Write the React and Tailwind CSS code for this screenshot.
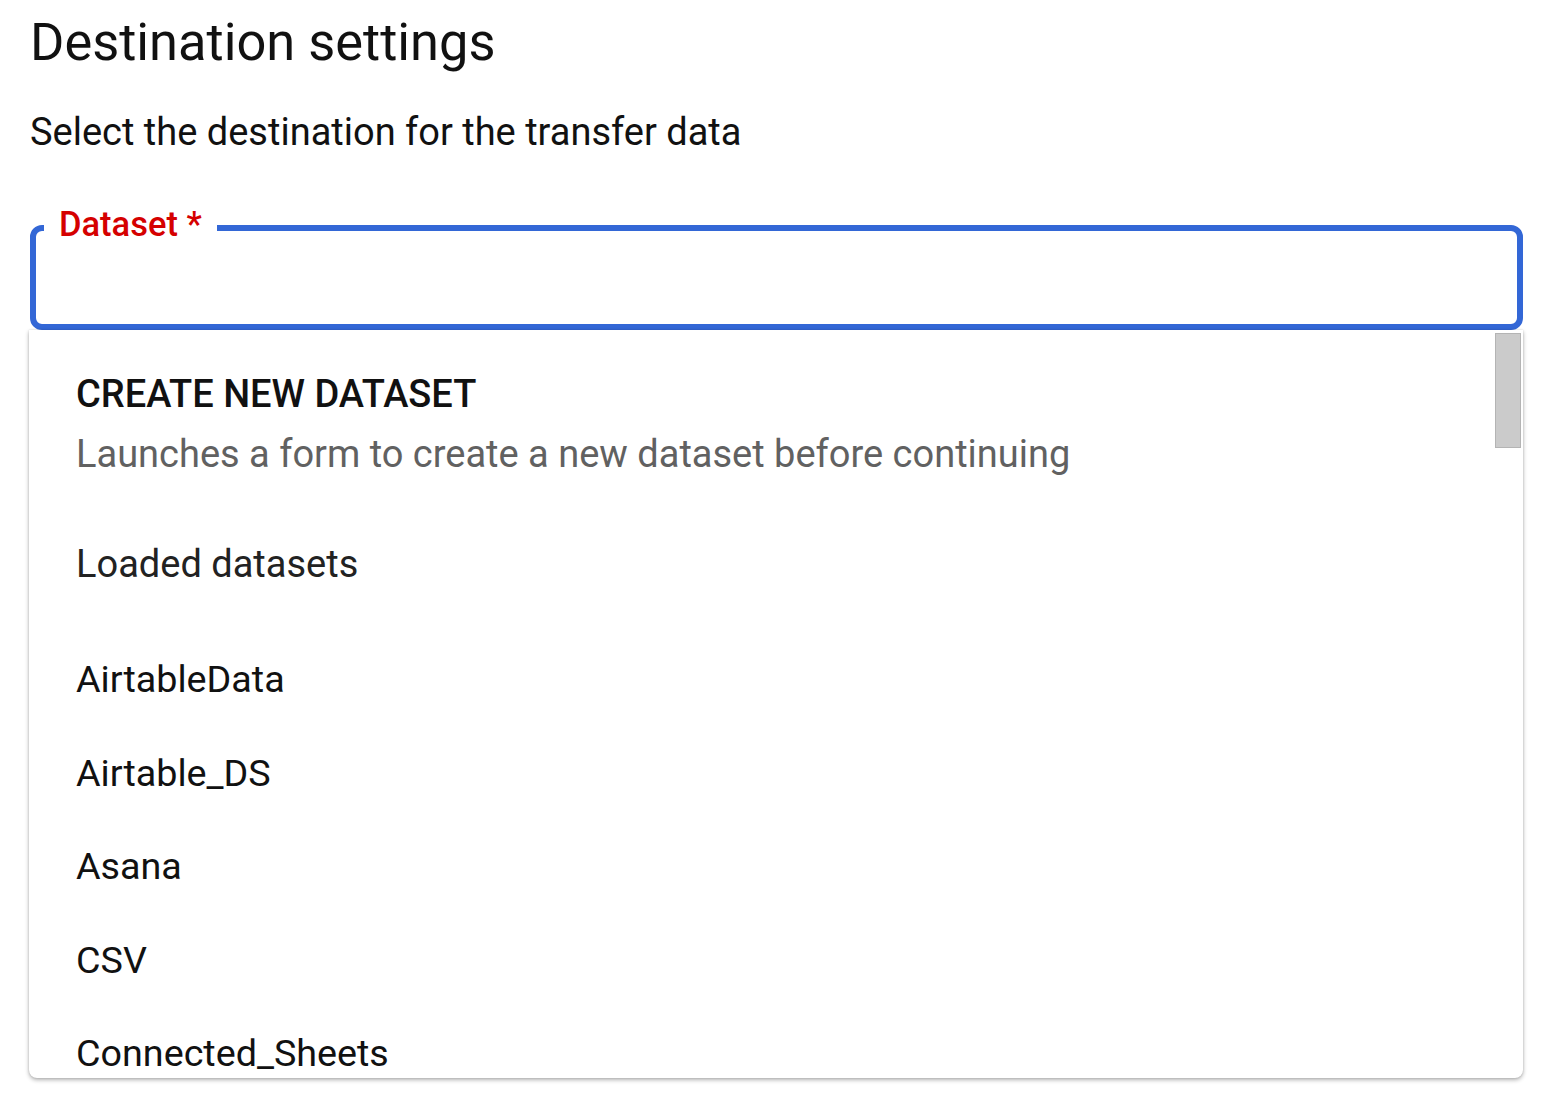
import React from 'react';

const datasets = ['AirtableData', 'Airtable_DS', 'Asana', 'CSV', 'Connected_Sheets'];

const DatasetMenu = () => (
  <div className="relative -ml-px h-[748px] overflow-hidden rounded-b-lg bg-white shadow-[0_2px_4px_rgba(0,0,0,0.3),0_0_2px_rgba(0,0,0,0.15)]">
    {/* scrollbar thumb */}
    <div className="absolute right-[2px] top-[3px] h-[115px] w-[26px] border border-[#b4b4b4] bg-[#cbcbcb]" />

    <div className="pl-[47px] pt-[34px]">
      <div className="text-[38px] font-medium leading-[60px] text-[#111]">CREATE NEW DATASET</div>
      <div className="text-[38px] leading-[60px] text-[#616161]">
        Launches a form to create a new dataset before continuing
      </div>
      <div className="mt-[50px] text-[38px] leading-[60px] text-[#222]">Loaded datasets</div>
      <ul className="mt-[39px]">
        {datasets.map((name) => (
          <li key={name} className="h-[93.5px] text-[37.7px] leading-[93.5px] text-[#111]">
            {name}
          </li>
        ))}
      </ul>
    </div>
  </div>
);

export default function App() {
  return (
    <div className="min-h-screen bg-white px-[30px] font-['Roboto',sans-serif]">
      <h1 className="pt-[16px] text-[52.4px] leading-none font-normal text-[#111]">Destination settings</h1>
      <p className="mt-[45px] text-[38px] leading-none text-[#111]">Select the destination for the transfer data</p>

      <div className="relative mt-[74px] h-[105px] rounded-[12px] border-[6px] border-[#3367d6]">
        <label className="absolute -top-[25px] left-[8px] bg-white px-[15px] text-[34.5px] font-medium leading-[36px] text-[#d50000]">
          Dataset *
        </label>
      </div>

      <DatasetMenu />
    </div>
  );
}
